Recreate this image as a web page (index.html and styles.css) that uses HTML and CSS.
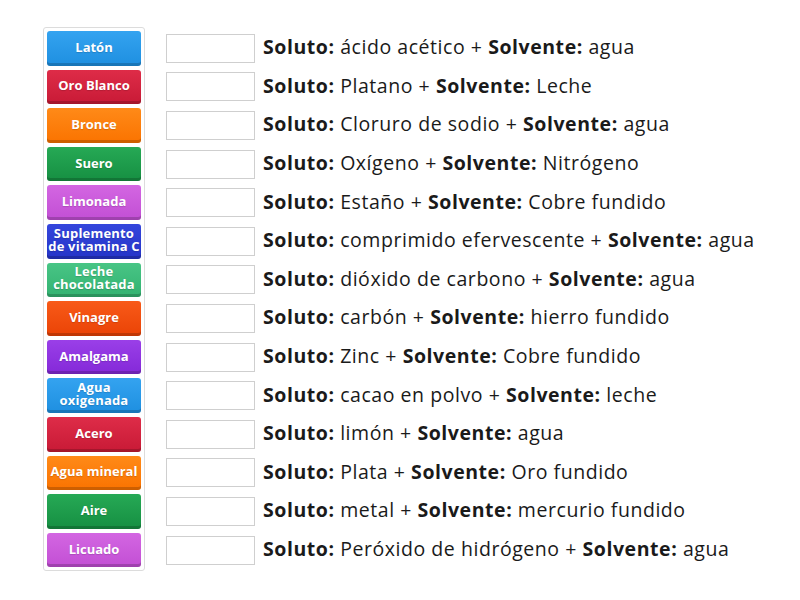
FILE: index.html
```html
<!DOCTYPE html>
<html lang="es">
<head>
<meta charset="utf-8">
<link rel="stylesheet" href="styles.css">
</head>
<body>
<div class="game">
  <div class="bank">
    <div class="tile blue">Latón</div>
    <div class="tile red">Oro Blanco</div>
    <div class="tile orange">Bronce</div>
    <div class="tile green">Suero</div>
    <div class="tile orchid">Limonada</div>
    <div class="tile indigo two">Suplemento de vitamina C</div>
    <div class="tile mint two">Leche chocolatada</div>
    <div class="tile vermilion">Vinagre</div>
    <div class="tile purple">Amalgama</div>
    <div class="tile blue two">Agua oxigenada</div>
    <div class="tile red">Acero</div>
    <div class="tile orange">Agua mineral</div>
    <div class="tile green">Aire</div>
    <div class="tile orchid">Licuado</div>
  </div>
  <div class="rows">
    <div class="row"><div class="slot"></div><div class="text"><b>Soluto:</b> ácido acético + <b>Solvente:</b> agua</div></div>
    <div class="row"><div class="slot"></div><div class="text"><b>Soluto:</b> Platano + <b>Solvente:</b> Leche</div></div>
    <div class="row"><div class="slot"></div><div class="text"><b>Soluto:</b> Cloruro de sodio + <b>Solvente:</b> agua</div></div>
    <div class="row"><div class="slot"></div><div class="text"><b>Soluto:</b> Oxígeno + <b>Solvente:</b> Nitrógeno</div></div>
    <div class="row"><div class="slot"></div><div class="text"><b>Soluto:</b> Estaño + <b>Solvente:</b> Cobre fundido</div></div>
    <div class="row"><div class="slot"></div><div class="text"><b>Soluto:</b> comprimido efervescente + <b>Solvente:</b> agua</div></div>
    <div class="row"><div class="slot"></div><div class="text"><b>Soluto:</b> dióxido de carbono + <b>Solvente:</b> agua</div></div>
    <div class="row"><div class="slot"></div><div class="text"><b>Soluto:</b> carbón + <b>Solvente:</b> hierro fundido</div></div>
    <div class="row"><div class="slot"></div><div class="text"><b>Soluto:</b> Zinc + <b>Solvente:</b> Cobre fundido</div></div>
    <div class="row"><div class="slot"></div><div class="text"><b>Soluto:</b> cacao en polvo + <b>Solvente:</b> leche</div></div>
    <div class="row"><div class="slot"></div><div class="text"><b>Soluto:</b> limón + <b>Solvente:</b> agua</div></div>
    <div class="row"><div class="slot"></div><div class="text"><b>Soluto:</b> Plata + <b>Solvente:</b> Oro fundido</div></div>
    <div class="row"><div class="slot"></div><div class="text"><b>Soluto:</b> metal + <b>Solvente:</b> mercurio fundido</div></div>
    <div class="row"><div class="slot"></div><div class="text"><b>Soluto:</b> Peróxido de hidrógeno + <b>Solvente:</b> agua</div></div>
  </div>
</div>
</body>
</html>
```
FILE: styles.css
```css
html, body {
  margin: 0;
  padding: 0;
  background: #fff;
}
body {
  font-family: "Open Sans", "Noto Sans", sans-serif;
  color: #222;
}
.game {
  display: flex;
  align-items: flex-start;
  padding: 27px 0 0 43px;
  gap: 21px;
}
.bank {
  display: flex;
  flex-direction: column;
  gap: 4px;
  padding: 3px;
  border: 1px solid #dcdcdc;
  border-radius: 3px;
  width: 94px;
}
.tile {
  height: 34.6px;
  box-sizing: border-box;
  border-radius: 3px;
  color: #fff;
  font-weight: 700;
  font-size: 13px;
  line-height: 13px;
  display: flex;
  align-items: center;
  justify-content: center;
  text-align: center;
  padding: 0 0 2px;
  box-shadow: inset 0 -3px 0 rgba(0,0,0,0.18);
  text-shadow: 0 1px 1px rgba(0,0,0,0.15);
}
.tile.two {
  font-size: 13px;
  line-height: 13px;
  letter-spacing: 0.2px;
  padding-bottom: 3px;
}
.blue { background: linear-gradient(#34a3f0, #1e8fe0); }
.red { background: linear-gradient(#de2c48, #c81a36); }
.orange { background: linear-gradient(#ff8a18, #fa7300); }
.green { background: linear-gradient(#26a955, #168f42); }
.orchid { background: linear-gradient(#d366e2, #c24fd4); }
.indigo { background: linear-gradient(#3446dc, #2534c8); }
.mint { background: linear-gradient(#48c585, #33b271); }
.vermilion { background: linear-gradient(#f85a18, #ea4306); }
.purple { background: linear-gradient(#9a3fe8, #8429d8); }
.rows {
  display: flex;
  flex-direction: column;
  gap: 4px;
  padding-top: 4px;
}
.row {
  display: flex;
  align-items: center;
  height: 34.6px;
  gap: 8px;
}
.slot {
  width: 89px;
  height: 29px;
  box-sizing: border-box;
  border: 1px solid #cfcfcf;
  background: #fff;
  flex: none;
}
.text {
  font-size: 19.5px;
  letter-spacing: 0.55px;
  white-space: nowrap;
  color: #1a1a1a;
  padding-bottom: 3px;
}
.text b {
  font-weight: 700;
}
```
